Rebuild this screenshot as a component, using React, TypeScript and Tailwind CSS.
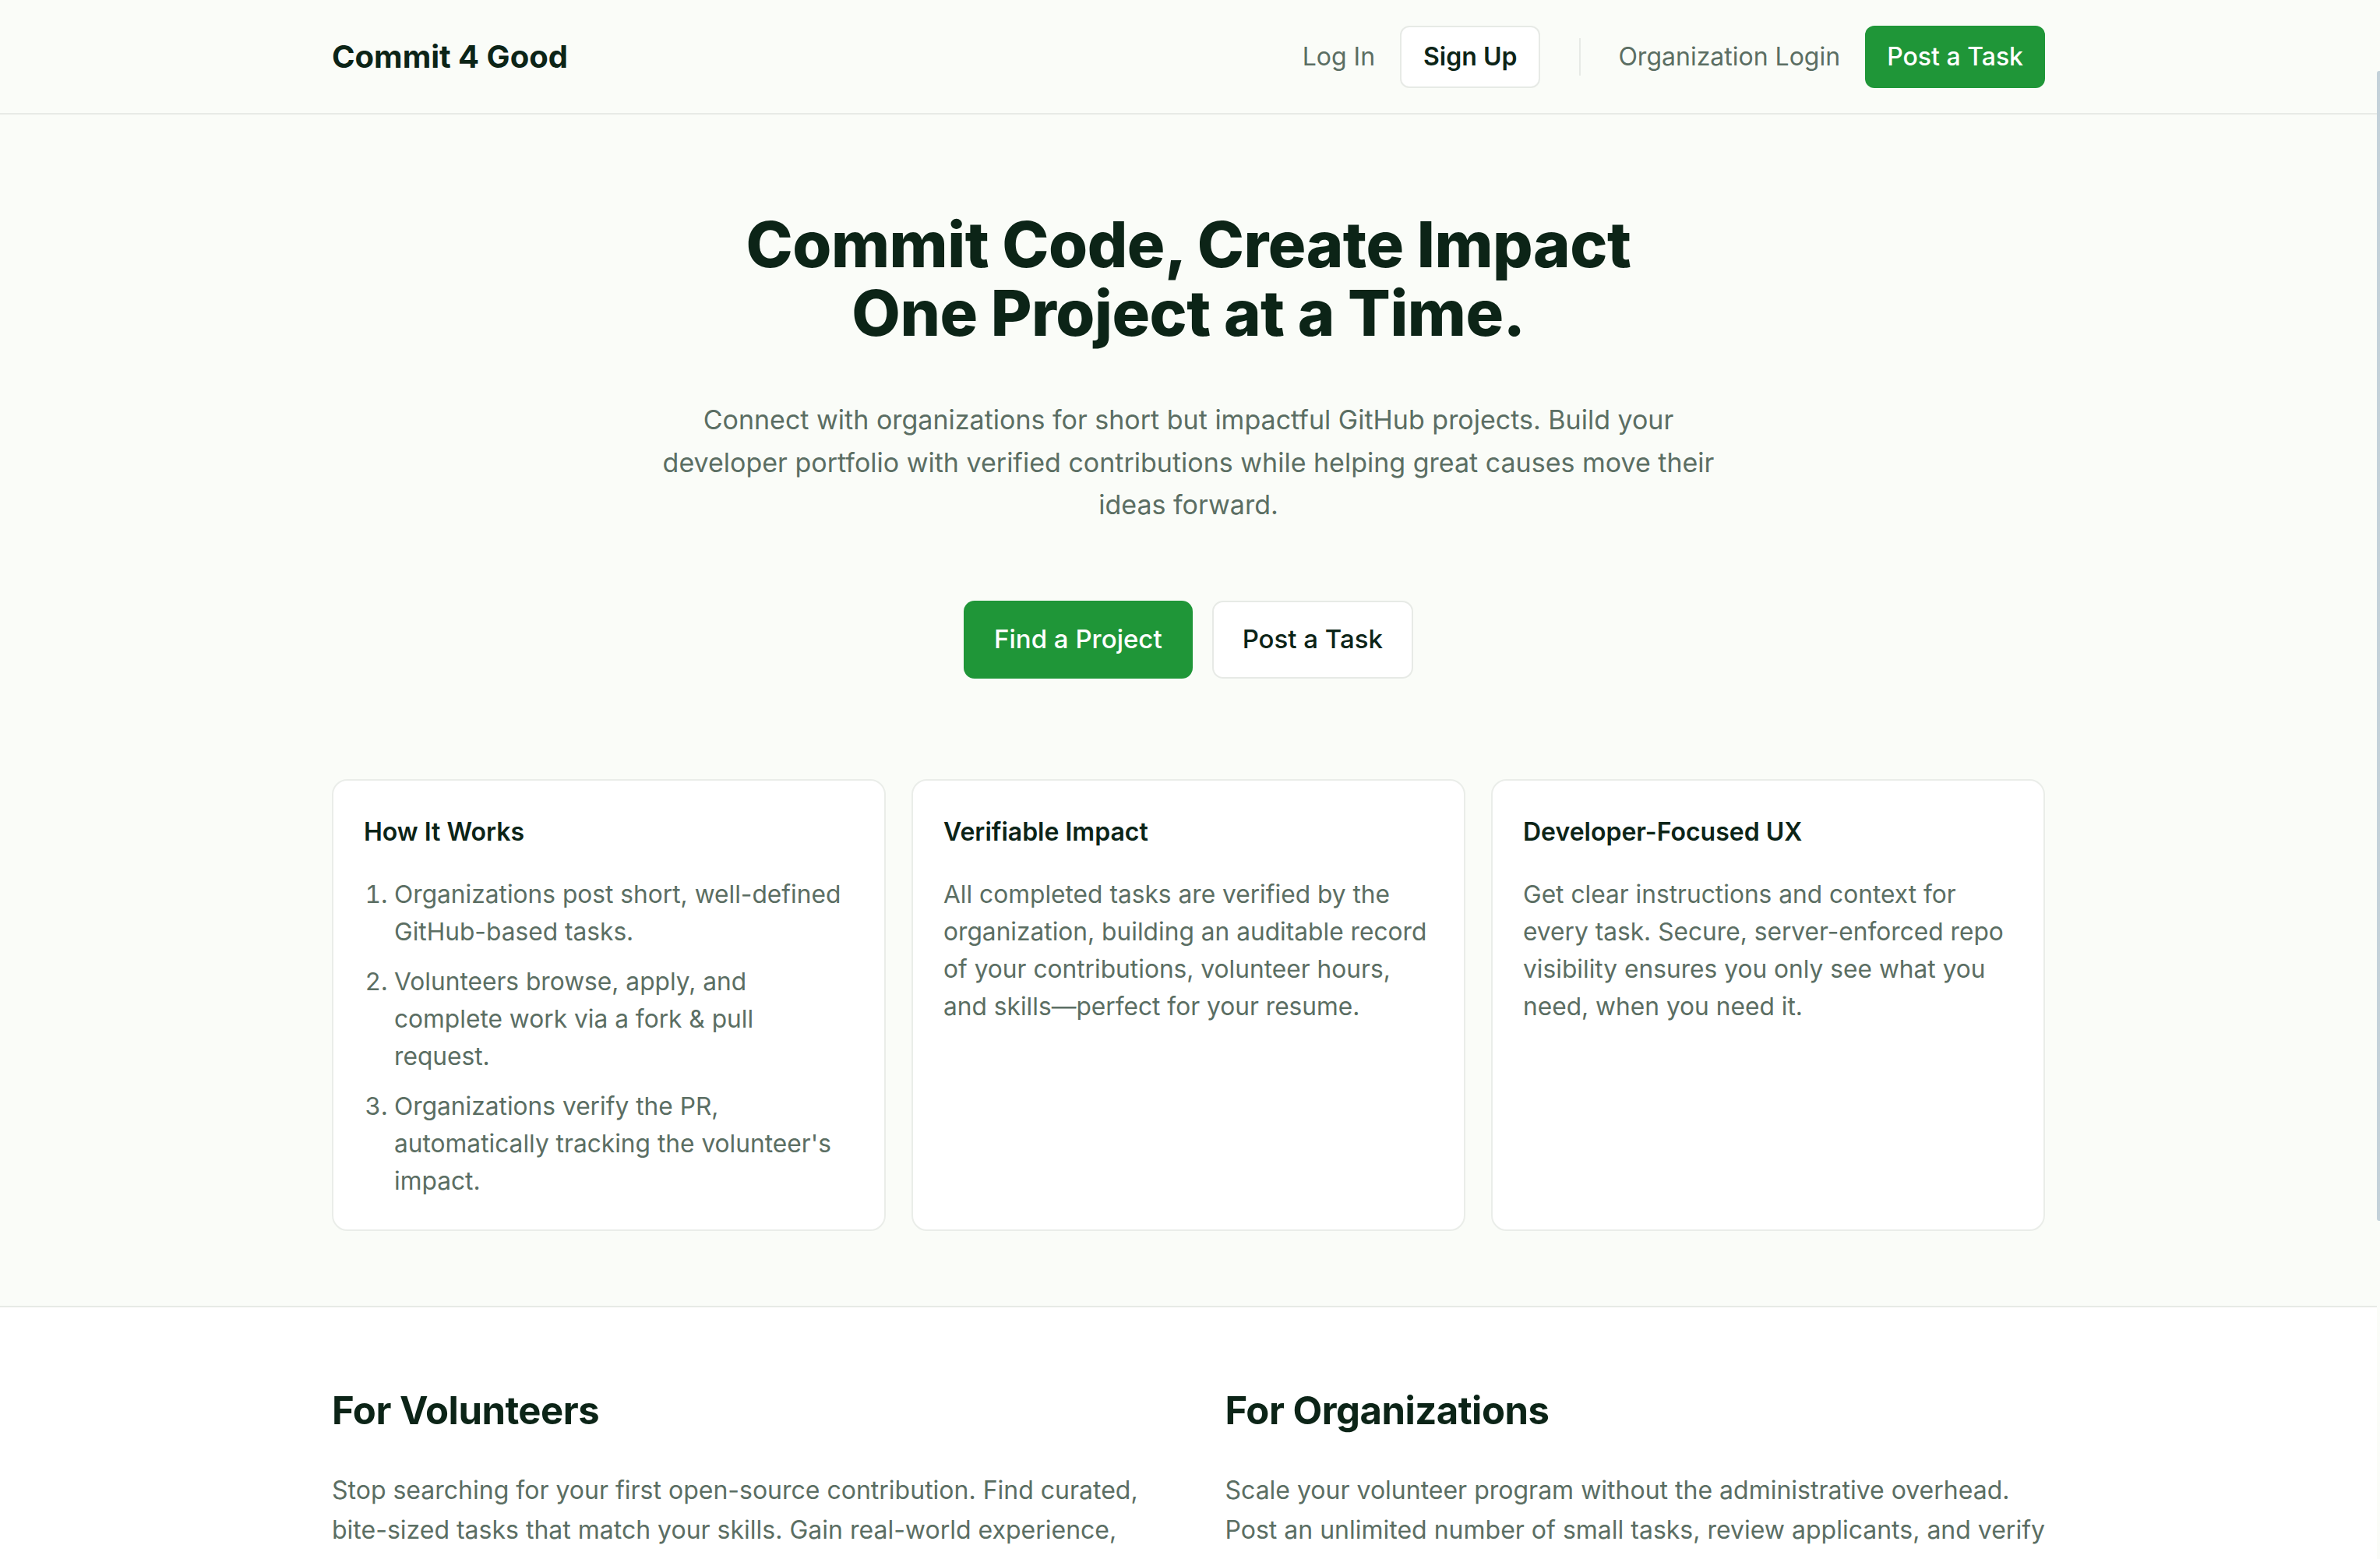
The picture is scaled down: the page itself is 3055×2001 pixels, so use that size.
import React from "react";

const dark = "text-[#0c2417]";
const muted = "text-[#5b6e63]";

function Header() {
  return (
    <header className="h-[147px] border-b-2 border-[#e7eae6] bg-[#fafcf8]">
      <div className="mx-auto flex h-full w-[2199px] items-center justify-between">
        <div className={`text-[40px] font-bold ${dark}`}>Commit 4 Good</div>
        <nav className="flex items-center">
          <button className={`flex h-[80px] items-center px-[28px] text-[32px] font-normal ${muted}`}>Log In</button>
          <button className={`ml-[4px] flex h-[80px] items-center rounded-[12px] border-2 border-[#e7eae6] bg-white px-[28px] text-[32px] font-semibold ${dark}`}>
            Sign Up
          </button>
          <div className="ml-[50px] h-[48px] w-[2px] bg-[#e7eae6]" />
          <button className={`ml-[20px] flex h-[80px] items-center px-[28px] text-[32px] font-normal ${muted}`}>Organization Login</button>
          <button className="ml-[4px] flex h-[80px] items-center rounded-[12px] bg-[#1f9638] px-[28px] text-[32px] font-medium text-white">
            Post a Task
          </button>
        </nav>
      </div>
    </header>
  );
}

function Card({ title, children }: { title: string; children: React.ReactNode }) {
  return (
    <div className="rounded-[20px] border-2 border-[#eaede9] bg-white px-[39px] pb-[38px] pt-[44px]">
      <h3 className={`text-[32px] font-semibold leading-[44px] ${dark}`}>{title}</h3>
      <div className={`mt-[34px] text-[31.7px] leading-[48px] ${muted}`}>{children}</div>
    </div>
  );
}

function Hero() {
  return (
    <section className="border-b-2 border-[#e7eae6] bg-[#fafcf8] pb-[96px] pt-[123px]">
      <div className="mx-auto w-[2199px]">
        <h1 className={`text-center text-[81px] font-extrabold leading-[88px] tracking-[-0.5px] ${dark}`}>
          Commit Code, Create Impact
          <br />
          One Project at a Time.
        </h1>
        <p className={`mx-auto mt-[66px] max-w-[1380px] text-center text-[34px] leading-[54.5px] ${muted}`}>
          Connect with organizations for short but impactful GitHub projects. Build your developer portfolio with verified
          contributions while helping great causes move their ideas forward.
        </p>
        <div className="mt-[95px] flex justify-center gap-[25px]">
          <button className="flex h-[100px] items-center rounded-[14px] bg-[#1f9638] px-[39px] text-[33px] font-medium text-white">
            Find a Project
          </button>
          <button className={`flex h-[100px] items-center rounded-[14px] border-2 border-[#e7eae6] bg-white px-[37px] text-[33px] font-medium ${dark}`}>
            Post a Task
          </button>
        </div>
        <div className="mt-[129px] grid grid-cols-3 gap-[33px]">
          <Card title="How It Works">
            <ol className="list-decimal space-y-[16px] pl-[39px]">
              <li>Organizations post short, well-defined GitHub-based tasks.</li>
              <li>Volunteers browse, apply, and complete work via a fork &amp; pull request.</li>
              <li>Organizations verify the PR, automatically tracking the volunteer's impact.</li>
            </ol>
          </Card>
          <Card title="Verifiable Impact">
            <p>
              All completed tasks are verified by the organization, building an auditable record of your contributions,
              volunteer hours, and skills—perfect for your resume.
            </p>
          </Card>
          <Card title="Developer-Focused UX">
            <p>
              Get clear instructions and context for every task. Secure, server-enforced repo visibility ensures you only
              see what you need, when you need it.
            </p>
          </Card>
        </div>
      </div>
    </section>
  );
}

function Audience() {
  return (
    <section className="bg-white pb-[120px] pt-[101px]">
      <div className="mx-auto grid w-[2199px] grid-cols-2 gap-[94px]">
        <div>
          <h2 className={`text-[49px] font-bold leading-[64px] tracking-[-0.5px] ${dark}`}>For Volunteers</h2>
          <p className={`mt-[44px] text-[32px] leading-[51px] ${muted}`}>
            Stop searching for your first open-source contribution. Find curated, bite-sized tasks that match your skills.
            Gain real-world experience, build a verifiable portfolio, and make a difference for causes you care about.
          </p>
        </div>
        <div>
          <h2 className={`text-[49px] font-bold leading-[64px] tracking-[-0.5px] ${dark}`}>For Organizations</h2>
          <p className={`mt-[44px] text-[32px] leading-[51px] ${muted}`}>
            Scale your volunteer program without the administrative overhead. Post an unlimited number of small tasks,
            review applicants, and verify completed work, all from a single dashboard.
          </p>
        </div>
      </div>
    </section>
  );
}

export default function App() {
  return (
    <div className="flex h-[2001px] w-[3055px] overflow-hidden bg-[#fafcf8] font-['Inter',sans-serif]">
      <main className="h-full w-[3051px] shrink-0 overflow-hidden">
        <Header />
        <Hero />
        <Audience />
      </main>
      <div className="h-full w-[4px] shrink-0 bg-[#fafcf8] pt-[91px]">
        <div className="h-[1476px] w-[4px] rounded-tl-[3px] rounded-bl-[3px] bg-[#c3d1d9]" />
      </div>
    </div>
  );
}
